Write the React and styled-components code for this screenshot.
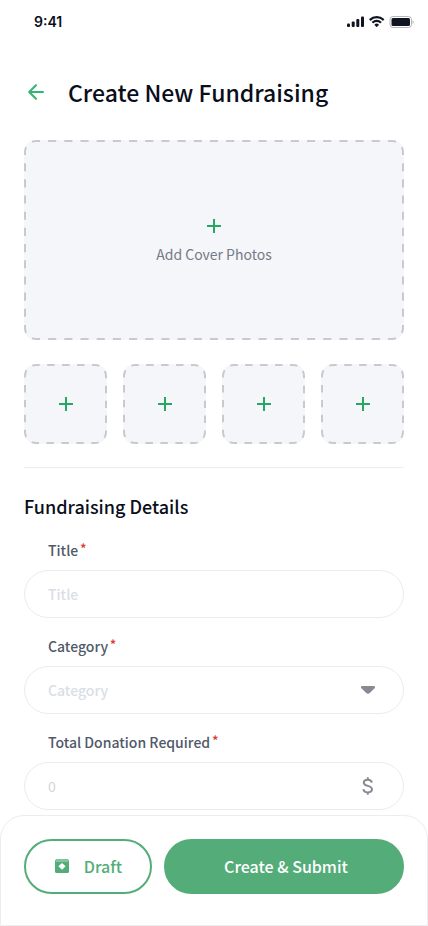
import React from "react";
import styled, { createGlobalStyle } from "styled-components";

const GlobalStyle = createGlobalStyle`
  *, *::before, *::after { box-sizing: border-box; }
  body { margin: 0; background: #fff; }
  body, button, input, select {
    font-family: "Noto Sans CJK SC", "Noto Sans", sans-serif;
  }
`;

const Page = styled.div`
  min-height: 100vh;
  display: flex;
  flex-direction: column;
  background: #fff;
  color: #0a0e1a;
`;

const StatusBar = styled.div`
  height: 44px;
  display: flex;
  align-items: center;
  justify-content: space-between;
  padding: 0 14px 0 34px;
  flex-shrink: 0;
`;

const Time = styled.span`
  font-family: Inter, sans-serif;
  font-size: 14px;
  line-height: 20px;
  font-weight: 600;
`;

const Header = styled.header`
  height: 96px;
  display: flex;
  align-items: center;
  gap: 20px;
  padding: 0 24px;
  flex-shrink: 0;
`;

const IconButton = styled.button`
  width: 24px;
  height: 24px;
  padding: 0;
  border: 0;
  background: none;
  color: #32b574;
  cursor: pointer;
  svg { display: block; }
`;

const PageTitle = styled.h1`
  margin: 0;
  font-size: 23px;
  line-height: 32px;
  font-weight: 500;
`;

const Content = styled.main`
  flex: 1;
  padding: 0 24px 5px;
`;

const UploadTile = styled.button`
  position: relative;
  display: flex;
  flex-direction: column;
  align-items: center;
  justify-content: center;
  gap: 4px;
  width: 100%;
  height: ${(p) => p.$height}px;
  padding: 0;
  border: 0;
  border-radius: 12px;
  background: #f4f6fa;
  color: #767a86;
  font-size: 14px;
  line-height: 24px;
  cursor: pointer;
`;

const DashOutline = styled.svg`
  position: absolute;
  inset: 0;
  width: 100%;
  height: 100%;
  rect {
    width: calc(100% - 2px);
    height: calc(100% - 2px);
    fill: none;
    stroke: #c9cacd;
    stroke-width: 2px;
  }
`;

const Thumbnails = styled.div`
  display: grid;
  grid-template-columns: repeat(4, 1fr);
  gap: 16px;
  margin-top: 24px;
  padding-bottom: 23px;
  border-bottom: 1px solid #ebedf0;
`;

const SectionTitle = styled.h2`
  margin: 24px 0 18px;
  font-size: 18px;
  line-height: 28px;
  font-weight: 500;
`;

const Form = styled.form`
  display: flex;
  flex-direction: column;
  gap: 16px;
`;

const Field = styled.div`
  display: flex;
  flex-direction: column;
  gap: 8px;
`;

const Label = styled.label`
  display: flex;
  gap: 2px;
  padding-left: 24px;
  font-size: 14px;
  line-height: 24px;
  font-weight: 500;
  color: #505969;
`;

const Required = styled.span`
  font-size: 12px;
  line-height: 20px;
  font-weight: 700;
  color: #dc3b3b;
`;

const Control = styled.div`
  display: flex;
  align-items: center;
  height: 48px;
  padding: 0 23px;
  border: 1px solid #ebecef;
  border-radius: 24px;
  color: #868a93;
  &:focus-within { border-color: #54ad79; }
  svg { display: block; flex-shrink: 0; }
`;

const TextInput = styled.input`
  flex: 1;
  min-width: 0;
  height: 24px;
  padding: 0;
  border: 0;
  outline: 0;
  background: none;
  font-size: 14px;
  font-weight: ${(p) => (p.$light ? 400 : 500)};
  color: #333a47;
  &::placeholder { color: ${(p) => (p.$light ? "#d2d5dc" : "#dadee5")}; opacity: 1; }
`;

const Select = styled.select`
  flex: 1;
  min-width: 0;
  height: 24px;
  padding: 0;
  border: 0;
  outline: 0;
  appearance: none;
  background: none;
  font-size: 14px;
  font-weight: 500;
  color: #dadee5;
  option { color: #333a47; }
`;

const ActionBar = styled.footer`
  position: sticky;
  bottom: 0;
  display: flex;
  gap: 12px;
  padding: 23px 23px 31px;
  border: 1px solid #ecedf1;
  border-radius: 24px 24px 0 0;
  background: #fff;
`;

const ActionButton = styled.button`
  display: flex;
  align-items: center;
  justify-content: center;
  gap: 12px;
  flex: ${(p) => (p.$primary ? "1 1 0" : "0 0 128px")};
  height: 55px;
  padding: ${(p) => (p.$primary ? "0 0 2px 4px" : "0 2px 2px 0")};
  border: 2px solid #54ad79;
  border-radius: 28px;
  background: ${(p) => (p.$primary ? "#54ad79" : "#fff")};
  color: ${(p) => (p.$primary ? "#fff" : "#54ad79")};
  font-size: 16px;
  line-height: 24px;
  font-weight: 500;
  cursor: pointer;
`;

const StatusIcons = () => (
  <svg width="68" height="14" viewBox="0 0 68 14" aria-hidden="true">
    <g fill="#0f1420">
      <rect x="1" y="8.4" width="3" height="3.6" rx="1" />
      <rect x="5.7" y="6.4" width="3" height="5.6" rx="1" />
      <rect x="10.3" y="4" width="3" height="8" rx="1" />
      <rect x="15" y="1.5" width="3" height="10.5" rx="1" />
      <path d="M30.7 3.3c2.2 0 4.3.85 5.9 2.36.12.12.31.12.43 0l1.15-1.18a.33.33 0 0 0 0-.47 10.9 10.9 0 0 0-14.96 0 .33.33 0 0 0 0 .47l1.15 1.18c.12.12.31.12.43 0A8.6 8.6 0 0 1 30.7 3.3zm0 3.8c1.2 0 2.35.45 3.23 1.26.12.12.31.11.43 0l1.15-1.18a.34.34 0 0 0 0-.48 7 7 0 0 0-9.62 0 .34.34 0 0 0 0 .48l1.15 1.18c.12.11.31.12.43 0A4.8 4.8 0 0 1 30.7 7.1zm2.2 2.6a.34.34 0 0 1-.1.25l-1.88 1.95a.3.3 0 0 1-.44 0L28.6 9.95a.34.34 0 0 1 0-.48 3.3 3.3 0 0 1 4.2 0c.06.06.1.14.1.23z" />
      <rect x="45.5" y="3" width="18.5" height="8" rx="1.5" />
    </g>
    <rect x="44" y="1.5" width="21.5" height="11" rx="3" fill="none" stroke="#0f1420" strokeOpacity=".3" />
    <path d="M66.5 5.2v3.7a2 2 0 0 0 0-3.7z" fill="#0f1420" fillOpacity=".3" />
  </svg>
);

const BackIcon = () => (
  <svg width="24" height="24" viewBox="0 0 24 24" fill="none" stroke="currentColor" strokeWidth="2" strokeLinecap="round" strokeLinejoin="round" aria-hidden="true">
    <path d="M19 12H5.5M12 5.2L5.2 12l6.8 6.8" />
  </svg>
);

const PlusIcon = () => (
  <svg width="24" height="24" viewBox="0 0 24 24" fill="none" stroke="#27a862" strokeWidth="2" aria-hidden="true">
    <path d="M12 5v14M5 12h14" />
  </svg>
);

const CaretIcon = () => (
  <svg width="24" height="24" viewBox="0 0 24 24" fill="currentColor" aria-hidden="true">
    <path d="M6.2 8h11.6c1.3 0 1.7 1.3.8 2.2l-4.8 4.700c-1 1-2.600 1-3.600 0L5.4 10.2C4.500 9.300 4.900 8 6.200 8z" />
  </svg>
);

const DollarIcon = () => (
  <svg width="24" height="24" viewBox="0 0 24 24" fill="none" stroke="currentColor" strokeWidth="2" aria-hidden="true">
    <path d="M15.800 8.600C15.500 6.600 13.800 5.700 11.800 5.700c-2.200 0-4 1.100-4 3 0 2 1.700 2.600 4 3.200s4.200 1.400 4.200 3.400-1.900 3.100-4.200 3.100c-2.400 0-4.200-1-4.400-3.200M11.800 3.200v2.500M11.800 18.300v2.500" />
  </svg>
);

const ArchiveIcon = () => (
  <svg width="20" height="20" viewBox="0 0 20 20" aria-hidden="true">
    <path d="M4 3.300h12l1 1.700v10.500a1.500 1.500 0 0 1-1.500 1.500h-11A1.500 1.500 0 0 1 3 15.500V5z" fill="#54ad79" />
    <path d="M4 5h12" stroke="#fff" strokeOpacity=".6" strokeWidth="1" />
    <path d="M10 7l3.600 3.300-3.600 3.400-3.600-3.400z" fill="#fff" />
  </svg>
);

const Outline = ({ dashes }) => (
  <DashOutline aria-hidden="true">
    <rect x="1" y="1" rx="11" pathLength={dashes * 20} strokeDasharray="10 10" strokeDashoffset="5" />
  </DashOutline>
);

const FormField = ({ id, label, children }) => (
  <Field>
    <Label htmlFor={id}>
      {label}
      <Required>*</Required>
    </Label>
    <Control>{children}</Control>
  </Field>
);

export default function App() {
  return (
    <>
      <GlobalStyle />
      <Page>
        <StatusBar>
          <Time>9:41</Time>
          <StatusIcons />
        </StatusBar>
        <Header>
          <IconButton type="button" aria-label="Back">
            <BackIcon />
          </IconButton>
          <PageTitle>Create New Fundraising</PageTitle>
        </Header>
        <Content>
          <UploadTile type="button" $height={200}>
            <Outline dashes={70} />
            <PlusIcon />
            Add Cover Photos
          </UploadTile>
          <Thumbnails>
            {[1, 2, 3, 4].map((n) => (
              <UploadTile key={n} type="button" $height={80} aria-label={`Add photo ${n}`}>
                <Outline dashes={20} />
                <PlusIcon />
              </UploadTile>
            ))}
          </Thumbnails>
          <SectionTitle>Fundraising Details</SectionTitle>
          <Form>
            <FormField id="title" label="Title">
              <TextInput id="title" type="text" placeholder="Title" />
            </FormField>
            <FormField id="category" label="Category">
              <Select id="category" defaultValue="">
                <option value="" disabled>Category</option>
              </Select>
              <CaretIcon />
            </FormField>
            <FormField id="total" label="Total Donation Required">
              <TextInput id="total" type="text" inputMode="numeric" placeholder="0" $light />
              <DollarIcon />
            </FormField>
          </Form>
        </Content>
        <ActionBar>
          <ActionButton type="button">
            <ArchiveIcon />
            Draft
          </ActionButton>
          <ActionButton type="button" $primary>
            Create &amp; Submit
          </ActionButton>
        </ActionBar>
      </Page>
    </>
  );
}
